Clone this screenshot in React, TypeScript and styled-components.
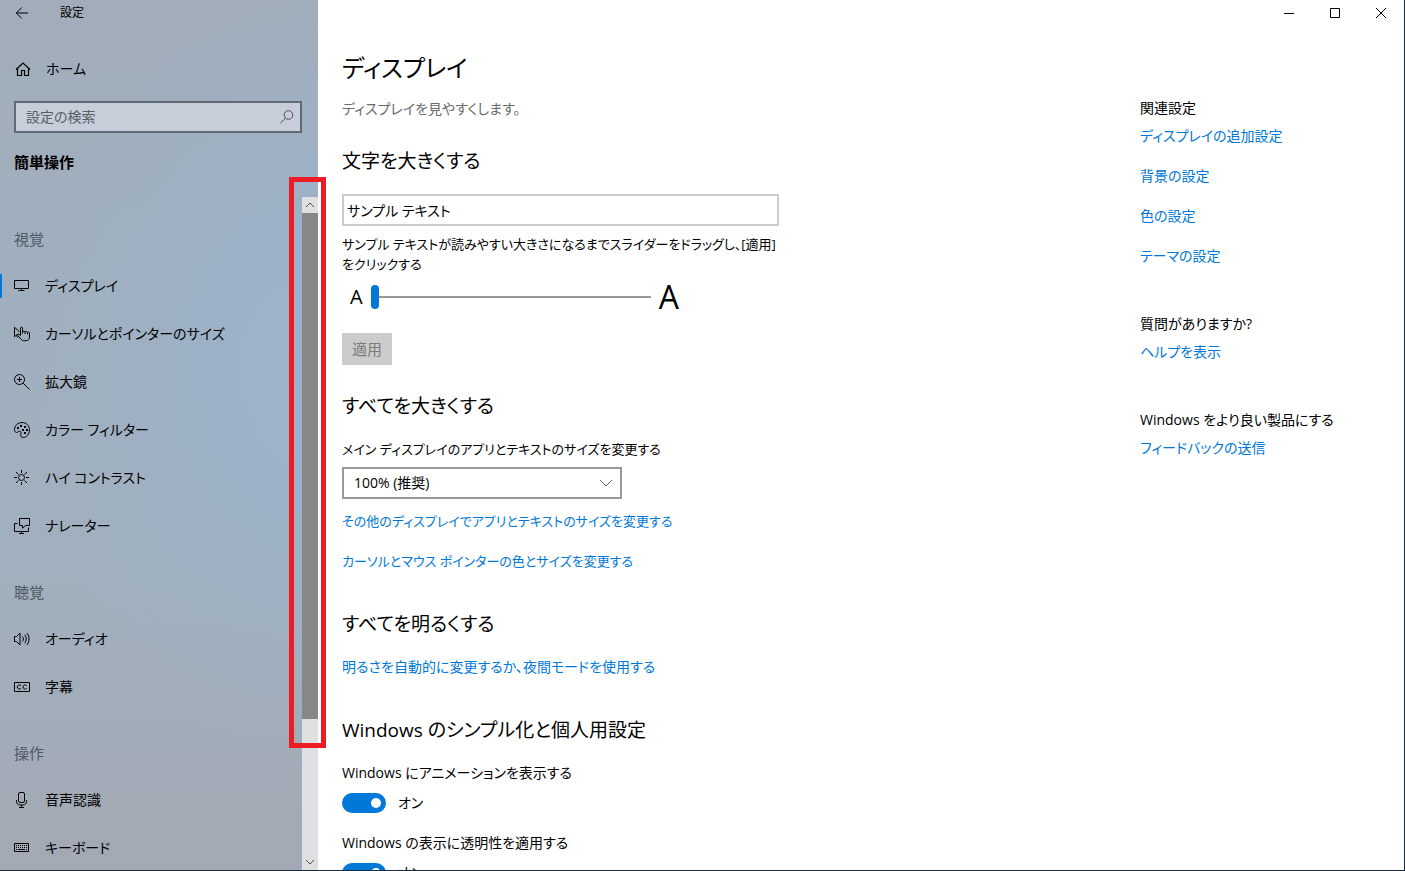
import React, { useState } from "react";
import styled, { createGlobalStyle } from "styled-components";

const accent = "#0078d7";

const GlobalStyle = createGlobalStyle`
  *, *::before, *::after { box-sizing: border-box; }
  body {
    margin: 0;
    font-family: "Open Sans", "Noto Sans CJK JP", sans-serif;
    font-size: 14px;
    line-height: 20px;
    font-feature-settings: "palt";
    color: #000;
    background: #fff;
  }
  button, input, select { font: inherit; font-feature-settings: inherit; color: inherit; margin: 0; }
  h1, h2, h3, p, ul { margin: 0; padding: 0; font-weight: 400; }
  li { list-style: none; }
`;

const Window = styled.div`
  display: flex;
  height: 100vh;
  overflow: hidden;
  border-right: 1px solid #1b2938;
  border-bottom: 1px solid #1b2938;
`;

const Sidebar = styled.aside`
  flex: 0 0 318px;
  display: flex;
  flex-direction: column;
  background:
    radial-gradient(ellipse 90% 45% at 100% 42%, #9bb3cb 0%, rgba(155, 179, 203, 0) 100%),
    linear-gradient(to bottom, #a1adba 0%, #a0afbe 30%, #a1b0be 65%, #a3a9b4 100%);
`;

const TitleBar = styled.div`
  display: flex;
  align-items: center;
  height: 26px;
  padding-left: 15px;
  font-size: 12px;
`;

const PlainButton = styled.button`
  display: flex;
  align-items: center;
  justify-content: center;
  padding: 0;
  border: 0;
  background: none;
`;

const AppName = styled.span`
  margin-left: 31px;
`;

const HomeLink = styled.a`
  display: flex;
  align-items: center;
  gap: 14px;
  height: 48px;
  margin-top: 19px;
  padding-left: 14px;
  color: inherit;
  text-decoration: none;
`;

const SearchBox = styled.label`
  display: flex;
  align-items: center;
  height: 32px;
  margin: 8px 16px 0 14px;
  padding: 0 5px 0 10px;
  border: 2px solid #606a75;
  background: #c7ceda;
`;

const SearchInput = styled.input`
  flex: 1;
  min-width: 0;
  padding: 0;
  border: 0;
  outline: 0;
  background: none;
  &::placeholder { color: #555d67; opacity: 1; }
`;

const Category = styled.h2`
  margin: 19px 0 25px 14px;
  font-size: 15px;
  line-height: 20px;
  font-weight: 700;
`;

const NavArea = styled.div`
  position: relative;
  flex: 1;
  min-height: 0;
  display: flex;
`;

const Nav = styled.nav`
  flex: 1;
  overflow: hidden;
`;

const GroupLabel = styled.h3`
  height: 65px;
  padding: 32px 0 0 14px;
  font-size: 15px;
  line-height: 20px;
  color: #4f5a66;
`;

const NavLink = styled.a<{ $active?: boolean }>`
  display: flex;
  align-items: center;
  gap: 15px;
  height: 48px;
  padding-left: 12px;
  color: inherit;
  text-decoration: none;
  &::before {
    content: "";
    width: 2px;
    height: 24px;
    margin: 0 -15px 0 -12px;
    background: ${(p) => (p.$active ? accent : "transparent")};
  }
  svg { margin-left: 12px; }
`;

const ScrollBar = styled.div`
  flex: 0 0 16px;
  display: flex;
  flex-direction: column;
  background: #dfe0e2;
`;

const ScrollButton = styled(PlainButton)`
  flex: 0 0 16px;
`;

const Track = styled.div`
  flex: 1;
`;

const Thumb = styled.div`
  height: 79%;
  background: #868788;
`;

const Highlight = styled.div`
  position: absolute;
  top: -20px;
  right: -8px;
  width: 37px;
  height: 571px;
  border: 5px solid #ed1c24;
  pointer-events: none;
`;

const Content = styled.div`
  flex: 1;
  min-width: 0;
  display: flex;
  flex-direction: column;
`;

const Caption = styled.div`
  display: flex;
  justify-content: flex-end;
  flex: 0 0 26px;
`;

const CaptionButton = styled(PlainButton)`
  width: 46px;
`;

const Columns = styled.div`
  flex: 1;
  min-height: 0;
  overflow: hidden;
  display: flex;
  justify-content: space-between;
`;

const Main = styled.main`
  width: 461px;
  padding: 22px 0 0 24px;
`;

const PageTitle = styled.h1`
  font-size: 24px;
  line-height: 40px;
`;

const Lead = styled.p`
  margin-top: 11px;
  color: #6b6b6b;
`;

const SectionTitle = styled.h2<{ $top: number }>`
  margin: ${(p) => p.$top}px 0 19px;
  font-size: 19px;
  line-height: 28px;
`;

const SampleInput = styled.input`
  display: block;
  width: 100%;
  height: 32px;
  padding: 0 3px;
  border: 2px solid #ccc;
  outline: 0;
`;

const Description = styled.label`
  display: block;
  margin-top: 8px;
  font-size: 13px;
`;

const SliderRow = styled.div`
  display: flex;
  align-items: center;
  gap: 8px;
  height: 32px;
  margin-top: 7px;
  padding-left: 8px;
`;

const Letter = styled.span<{ $size: number }>`
  font-size: ${(p) => p.$size}px;
  line-height: 32px;
`;

const Slider = styled.input`
  appearance: none;
  width: 280px;
  height: 24px;
  background: linear-gradient(#999, #999) center / 100% 2px no-repeat;
  &::-webkit-slider-thumb {
    appearance: none;
    width: 8px;
    height: 24px;
    border-radius: 4px;
    background: ${accent};
  }
`;

const ApplyButton = styled.button`
  display: block;
  width: 50px;
  height: 32px;
  margin-top: 20px;
  padding: 0;
  border: 0;
  background: #ccc;
  color: #7a7a7a;
  font-size: 15px;
`;

const FieldLabel = styled.label`
  display: block;
  font-size: 13px;
`;

const SelectBox = styled.div`
  display: grid;
  align-items: center;
  width: 280px;
  margin-top: 8px;
  > * { grid-area: 1 / 1; }
  svg { justify-self: end; margin-right: 9px; pointer-events: none; }
`;

const Select = styled.select`
  appearance: none;
  width: 100%;
  height: 32px;
  padding: 0 10px;
  border: 2px solid #999;
  border-radius: 0;
  background: #fff;
`;

const LinkList = styled.ul<{ $top: number }>`
  display: flex;
  flex-direction: column;
  gap: 20px;
  margin-top: ${(p) => p.$top}px;
`;

const FieldLinks = styled(LinkList)`
  font-size: 13px;
`;

const TextLink = styled.a`
  display: block;
  color: ${accent};
  text-decoration: none;
`;

const ToggleField = styled.label`
  display: block;
  margin-bottom: 20px;
`;

const ToggleRow = styled.span`
  display: flex;
  align-items: center;
  gap: 12px;
  margin-top: 10px;
`;

const Toggle = styled.input`
  appearance: none;
  display: flex;
  align-items: center;
  width: 44px;
  height: 20px;
  padding: 0 5px;
  border-radius: 10px;
  background: #999;
  &::before {
    content: "";
    width: 10px;
    height: 10px;
    border-radius: 5px;
    background: #fff;
  }
  &:checked { background: ${accent}; justify-content: flex-end; }
`;

const Related = styled.aside`
  flex: 0 0 264px;
  padding-top: 72px;
`;

const RelatedGroup = styled.section`
  margin-bottom: 48px;
`;

const RelatedTitle = styled.h3`
  font-size: 14px;
  line-height: 20px;
`;

type IconProps = { size?: number; children: React.ReactNode };

const Icon = ({ size = 16, children }: IconProps) => (
  <svg width={size} height={size} viewBox={`0 0 ${size} ${size}`} fill="none" stroke="currentColor" strokeWidth="1" aria-hidden="true">
    {children}
  </svg>
);

const BackIcon = () => (
  <Icon size={14}><path d="M1.500 7H13M6.800 1.500 1.300 7l5.500 5.500" /></Icon>
);
const HomeIcon = () => (
  <Icon size={18}><path d="M2 9.500 9 3l7 6.500M3.500 8.500v7h4v-5h3v5h4v-7" strokeWidth="1.200" /></Icon>
);
const SearchIcon = () => (
  <Icon><circle cx="9.500" cy="6" r="4.300" stroke="#454c55" /><path d="M6.500 9.200 1.500 14" stroke="#454c55" /></Icon>
);
const DisplayIcon = () => (
  <Icon><path d="M.5 2.500h14v8H.5zM7.500 10.500v2M4.500 12.500h6" /></Icon>
);
const PointerIcon = () => (
  <Icon>
    <path d="M4 8.500H3L.5 10.800V1.200l5 4.600M2.500 9.500l1 2" />
    <path d="M8.500 7.500V2.200c0-1.300-2-1.300-2 0v7.300L5 8.200c-.9-.7-1.900.2-1.300 1.100l3.300 4c.9 1.100 1.900 1.400 3.200 1.400h1.600c2.200 0 3.700-1.400 3.700-3.600V7.200c0-1.200-1.500-1.500-2-.7-.3-1.300-2-1.300-2.500-.5-.5-1-2-1-2.500 0M11 6v2M13.500 6.500v2" />
  </Icon>
);
const MagnifierIcon = () => (
  <Icon><circle cx="5.500" cy="5.500" r="5" /><path d="M9.200 9.200 15.500 15.500M5.500 3v5M3 5.500h5" /></Icon>
);
const PaletteIcon = () => (
  <Icon>
    <path d="M8 .5c4.300 0 7.500 3.200 7.500 7.300 0 4.500-3 7.700-6.300 7.700-1.600 0-2.500-1-2.500-2.300 0-1.500.6-2 .3-2.800-.4-1.300-1.700-1.300-2.600-.7-1 .7-1.700 1-2.500.6C.8 9.800.5 8.800.5 7.500.5 3.700 4 .5 8 .5z" />
    <g fill="currentColor" stroke="none"><rect x="3" y="5" width="2" height="2" /><rect x="6" y="3" width="2" height="2" /><rect x="10" y="4" width="2" height="2" /><rect x="12" y="7" width="2" height="2" /><rect x="8" y="7" width="2" height="2" /><rect x="10" y="10" width="2" height="2" /></g>
  </Icon>
);
const ContrastIcon = () => (
  <Icon><circle cx="7.500" cy="7.500" r="3" /><path d="M7.500 0v3M7.500 12v3M0 7.500h3M12 7.500h3M2 2l2.500 2.500M10.500 10.500 13 13M13 2l-2.500 2.500M4.500 10.500 2 13" /></Icon>
);
const NarratorIcon = () => (
  <Icon><path d="M5.500.5h10v7h-4l-3 2.700V7.500h-3zM3.500 5.500h-3v8h14v-4M7.500 13.500v2M5 15.500h5" /></Icon>
);
const AudioIcon = () => (
  <Icon><path d="M.5 5.500h2l3.500-3.500v12L2.500 10.500h-2zM8.500 5.500c1.200 1.500 1.200 3.500 0 5M10.700 3.700c2 2.600 2 6 0 8.600M12.900 2c2.900 3.600 2.900 8.400 0 12" /></Icon>
);
const CaptionIcon = () => (
  <Icon><path d="M.5 3.500h15v9H.5zM7 6.500C5.500 5.400 3.300 6 3.300 8S5.500 10.600 7 9.500M12.700 6.500C11.200 5.400 9 6 9 8s2.200 2.600 3.700 1.500" /></Icon>
);
const MicIcon = () => (
  <Icon><rect x="4.500" y=".5" width="6" height="10" rx="1.500" /><path d="M2.500 8v1.500c0 2 1.500 3.500 3.500 3.500h3c2 0 3.500-1.500 3.500-3.500V8M7.500 13v2.500M5 15.500h5" /></Icon>
);
const KeyboardIcon = () => (
  <Icon><path d="M.5 3.500h14v8H.5z" /><path d="M2 5.500h11M2 7.500h11" strokeDasharray="1 1" /><path d="M2 9.500h1M4 9.500h7M12 9.500h1" /></Icon>
);

const navGroups = [
  {
    label: "視覚",
    items: [
      { text: "ディスプレイ", icon: <DisplayIcon />, active: true },
      { text: "カーソルとポインターのサイズ", icon: <PointerIcon /> },
      { text: "拡大鏡", icon: <MagnifierIcon /> },
      { text: "カラー フィルター", icon: <PaletteIcon /> },
      { text: "ハイ コントラスト", icon: <ContrastIcon /> },
      { text: "ナレーター", icon: <NarratorIcon /> },
    ],
  },
  {
    label: "聴覚",
    items: [
      { text: "オーディオ", icon: <AudioIcon /> },
      { text: "字幕", icon: <CaptionIcon /> },
    ],
  },
  {
    label: "操作",
    items: [
      { text: "音声認識", icon: <MicIcon /> },
      { text: "キーボード", icon: <KeyboardIcon /> },
    ],
  },
];

const relatedGroups = [
  { title: "関連設定", links: ["ディスプレイの追加設定", "背景の設定", "色の設定", "テーマの設定"] },
  { title: "質問がありますか?", links: ["ヘルプを表示"] },
  { title: "Windows をより良い製品にする", links: ["フィードバックの送信"] },
];

function ToggleSetting({ label }: { label: string }) {
  const [on, setOn] = useState(true);
  return (
    <ToggleField>
      {label}
      <ToggleRow>
        <Toggle type="checkbox" role="switch" checked={on} onChange={() => setOn(!on)} />
        {on ? "オン" : "オフ"}
      </ToggleRow>
    </ToggleField>
  );
}

export default function App() {
  return (
    <>
      <GlobalStyle />
      <Window>
        <Sidebar>
          <TitleBar>
            <PlainButton aria-label="戻る"><BackIcon /></PlainButton>
            <AppName>設定</AppName>
          </TitleBar>
          <HomeLink href="#"><HomeIcon />ホーム</HomeLink>
          <SearchBox>
            <SearchInput type="text" placeholder="設定の検索" aria-label="設定の検索" />
            <SearchIcon />
          </SearchBox>
          <Category>簡単操作</Category>
          <NavArea>
            <Nav>
              {navGroups.map((group) => (
                <section key={group.label}>
                  <GroupLabel>{group.label}</GroupLabel>
                  {group.items.map((item) => (
                    <NavLink key={item.text} href="#" $active={item.active}>
                      {item.icon}
                      {item.text}
                    </NavLink>
                  ))}
                </section>
              ))}
            </Nav>
            <ScrollBar>
              <ScrollButton aria-label="上へスクロール">
                <Icon size={10}><path d="M1 7l4-4 4 4" stroke="#505050" /></Icon>
              </ScrollButton>
              <Track><Thumb /></Track>
              <ScrollButton aria-label="下へスクロール">
                <Icon size={10}><path d="M1 3l4 4 4-4" stroke="#505050" /></Icon>
              </ScrollButton>
            </ScrollBar>
            <Highlight />
          </NavArea>
        </Sidebar>
        <Content>
          <Caption>
            <CaptionButton aria-label="最小化"><Icon size={10}><path d="M0 5.500h10" /></Icon></CaptionButton>
            <CaptionButton aria-label="最大化"><Icon size={10}><path d="M.5.5h9v9h-9z" /></Icon></CaptionButton>
            <CaptionButton aria-label="閉じる"><Icon size={10}><path d="M0 0l10 10M10 0 0 10" /></Icon></CaptionButton>
          </Caption>
          <Columns>
            <Main>
              <PageTitle>ディスプレイ</PageTitle>
              <Lead>ディスプレイを見やすくします。</Lead>

              <SectionTitle $top={28}>文字を大きくする</SectionTitle>
              <SampleInput type="text" defaultValue="サンプル テキスト" aria-label="サンプル テキスト" />
              <Description htmlFor="text-size">
                サンプル テキストが読みやすい大きさになるまでスライダーをドラッグし、[適用] をクリックする
              </Description>
              <SliderRow>
                <Letter $size={20}>A</Letter>
                <Slider id="text-size" type="range" min={100} max={225} defaultValue={100} />
                <Letter $size={32}>A</Letter>
              </SliderRow>
              <ApplyButton disabled>適用</ApplyButton>

              <SectionTitle $top={27}>すべてを大きくする</SectionTitle>
              <FieldLabel htmlFor="scale">メイン ディスプレイのアプリとテキストのサイズを変更する</FieldLabel>
              <SelectBox>
                <Select id="scale" defaultValue="100">
                  <option value="100">100% (推奨)</option>
                  <option value="125">125%</option>
                </Select>
                <Icon size={14}><path d="M1 4l6 6 6-6" stroke="#666" /></Icon>
              </SelectBox>
              <FieldLinks $top={12}>
                <li><TextLink href="#">その他のディスプレイでアプリとテキストのサイズを変更する</TextLink></li>
                <li><TextLink href="#">カーソルとマウス ポインターの色とサイズを変更する</TextLink></li>
              </FieldLinks>

              <SectionTitle $top={39}>すべてを明るくする</SectionTitle>
              <TextLink href="#">明るさを自動的に変更するか、夜間モードを使用する</TextLink>

              <SectionTitle $top={39}>Windows のシンプル化と個人用設定</SectionTitle>
              <ToggleSetting label="Windows にアニメーションを表示する" />
              <ToggleSetting label="Windows の表示に透明性を適用する" />
            </Main>
            <Related>
              {relatedGroups.map((group) => (
                <RelatedGroup key={group.title}>
                  <RelatedTitle>{group.title}</RelatedTitle>
                  <LinkList $top={8}>
                    {group.links.map((text) => (
                      <li key={text}><TextLink href="#">{text}</TextLink></li>
                    ))}
                  </LinkList>
                </RelatedGroup>
              ))}
            </Related>
          </Columns>
        </Content>
      </Window>
    </>
  );
}
